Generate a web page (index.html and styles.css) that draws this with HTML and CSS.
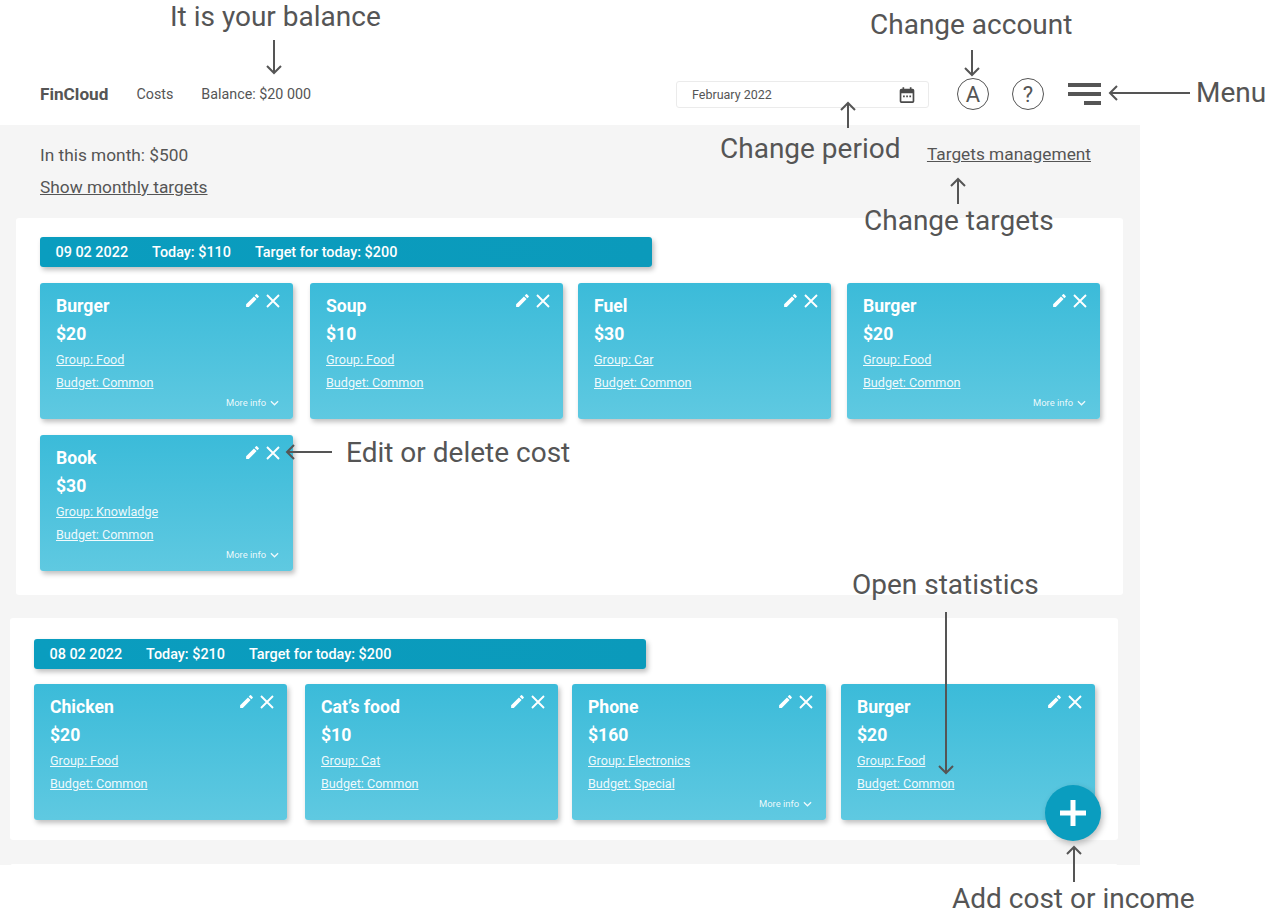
FILE: index.html
```html
<!DOCTYPE html>
<html lang="en">
<head>
    <meta charset="UTF-8">
    <meta name="viewport" content="width=device-width, initial-scale=1.0">
    <title>FinCloud - Costs</title>
    <link rel="stylesheet" href="styles.css">
</head>
<body>
    <svg class="icon-defs" width="0" height="0">
        <symbol id="i-pencil" viewBox="0 0 24 24"><path d="M3 17.25V21h3.75L17.81 9.94l-3.75-3.75L3 17.25zM20.71 7.04a1 1 0 0 0 0-1.41l-2.34-2.34a1 1 0 0 0-1.41 0l-1.83 1.83 3.75 3.75 1.83-1.83z"/></symbol>
        <symbol id="i-close" viewBox="0 0 14 14"><path d="M1 1l12 12M13 1L1 13" fill="none" stroke="currentColor" stroke-width="1.9"/></symbol>
        <symbol id="i-chevron" viewBox="0 0 10 6"><path d="M1 1l4 4 4-4" fill="none" stroke="currentColor" stroke-width="1.4"/></symbol>
    </svg>

    <div class="app">
        <header class="topbar">
            <a class="logo" href="#">FinCloud</a>
            <a class="nav-link" href="#">Costs</a>
            <span class="nav-link">Balance: $20 000</span>
            <div class="period">
                <span>February 2022</span>
                <svg class="calendar" viewBox="0 0 16 16" width="18" height="18"><path d="M4 1h1.500v1.500h5V1H12v1.500h1A1.500 1.500 0 0 1 14.500 4v9.500A1.500 1.500 0 0 1 13 15H3a1.500 1.500 0 0 1-1.500-1.500V4A1.500 1.500 0 0 1 3 2.500h1V1zM3 6.500v7h10v-7H3zm1.500 2h1.500V10H4.500V8.500zm2.800 0h1.500V10H7.300V8.500zm2.800 0h1.500V10h-1.500V8.500z" fill="#4a4a4a"/></svg>
            </div>
            <span class="round-btn">A</span>
            <span class="round-btn help">?</span>
            <div class="burger"><i></i><i></i><i class="short"></i></div>
        </header>

        <main class="content">
            <div class="summary">
                <div>
                    <p class="month-total">In this month: $500</p>
                    <a class="text-link" href="#">Show monthly targets</a>
                </div>
                <a class="text-link targets-link" href="#">Targets management</a>
            </div>

            <section class="day day-first">
                <div class="day-bar"><b>09 02 2022</b><b>Today: $110</b><b>Target for today: $200</b></div>
                <div class="cards cards-first">
                    <article class="card">
                        <div class="card-tools"><svg class="pencil"><use href="#i-pencil"/></svg><svg class="close"><use href="#i-close"/></svg></div>
                        <h3>Burger</h3><p class="price">$20</p>
                        <a href="#">Group: Food</a><a href="#">Budget: Common</a>
                        <span class="more">More info <svg class="chevron"><use href="#i-chevron"/></svg></span>
                    </article>
                    <article class="card">
                        <div class="card-tools"><svg class="pencil"><use href="#i-pencil"/></svg><svg class="close"><use href="#i-close"/></svg></div>
                        <h3>Soup</h3><p class="price">$10</p>
                        <a href="#">Group: Food</a><a href="#">Budget: Common</a>
                    </article>
                    <article class="card">
                        <div class="card-tools"><svg class="pencil"><use href="#i-pencil"/></svg><svg class="close"><use href="#i-close"/></svg></div>
                        <h3>Fuel</h3><p class="price">$30</p>
                        <a href="#">Group: Car</a><a href="#">Budget: Common</a>
                    </article>
                    <article class="card">
                        <div class="card-tools"><svg class="pencil"><use href="#i-pencil"/></svg><svg class="close"><use href="#i-close"/></svg></div>
                        <h3>Burger</h3><p class="price">$20</p>
                        <a href="#">Group: Food</a><a href="#">Budget: Common</a>
                        <span class="more">More info <svg class="chevron"><use href="#i-chevron"/></svg></span>
                    </article>
                    <article class="card">
                        <div class="card-tools"><svg class="pencil"><use href="#i-pencil"/></svg><svg class="close"><use href="#i-close"/></svg></div>
                        <h3>Book</h3><p class="price">$30</p>
                        <a href="#">Group: Knowladge</a><a href="#">Budget: Common</a>
                        <span class="more">More info <svg class="chevron"><use href="#i-chevron"/></svg></span>
                    </article>
                </div>
            </section>

            <section class="day day-second">
                <div class="day-bar"><b>08 02 2022</b><b>Today: $210</b><b>Target for today: $200</b></div>
                <div class="cards cards-second">
                    <article class="card">
                        <div class="card-tools"><svg class="pencil"><use href="#i-pencil"/></svg><svg class="close"><use href="#i-close"/></svg></div>
                        <h3>Chicken</h3><p class="price">$20</p>
                        <a href="#">Group: Food</a><a href="#">Budget: Common</a>
                    </article>
                    <article class="card">
                        <div class="card-tools"><svg class="pencil"><use href="#i-pencil"/></svg><svg class="close"><use href="#i-close"/></svg></div>
                        <h3>Cat’s food</h3><p class="price">$10</p>
                        <a href="#">Group: Cat</a><a href="#">Budget: Common</a>
                    </article>
                    <article class="card">
                        <div class="card-tools"><svg class="pencil"><use href="#i-pencil"/></svg><svg class="close"><use href="#i-close"/></svg></div>
                        <h3>Phone</h3><p class="price">$160</p>
                        <a href="#">Group: Electronics</a><a href="#">Budget: Special</a>
                        <span class="more">More info <svg class="chevron"><use href="#i-chevron"/></svg></span>
                    </article>
                    <article class="card">
                        <div class="card-tools"><svg class="pencil"><use href="#i-pencil"/></svg><svg class="close"><use href="#i-close"/></svg></div>
                        <h3>Burger</h3><p class="price">$20</p>
                        <a href="#">Group: Food</a><a href="#">Budget: Common</a>
                    </article>
                </div>
            </section>
            <div class="day-next"></div>
        </main>

        <button class="fab" type="button" aria-label="Add">
            <svg viewBox="0 0 26 26" width="26" height="26"><path d="M10.500 0h5v10.500H26v5H15.500V26h-5V15.500H0v-5h10.500z" fill="#fff"/></svg>
        </button>
    </div>

    <!-- notes drawn over the page -->
    <span class="note note-balance">It is your balance</span>
    <span class="note note-account">Change account</span>
    <span class="note note-menu">Menu</span>
    <span class="note note-period">Change period</span>
    <span class="note note-targets">Change targets</span>
    <span class="note note-edit">Edit or delete cost</span>
    <span class="note note-stats">Open statistics</span>
    <span class="note note-add">Add cost or income</span>

    <svg class="arrows" width="1268" height="914" viewBox="0 0 1268 914">
        <path d="M274 40v33M267 66l7 7 7-7"/>
        <path d="M972 50v25M965 68l7 7 7-7"/>
        <path d="M1190 93h-80M1117 86l-7 7 7 7"/>
        <path d="M848 128v-25M841 110l7-7 7 7"/>
        <path d="M958 204v-25M951 186l7-7 7 7"/>
        <path d="M332 452h-45M294 445l-7 7 7 7"/>
        <path d="M946 612v161M939 766l7 7 7-7"/>
        <path d="M1074 882v-35M1067 854l7-7 7 7"/>
    </svg>
</body>
</html>
```

FILE: styles.css
```css
* {
    box-sizing: border-box;
}

body {
    margin: 0;
    width: 1268px;
    height: 914px;
    position: relative;
    overflow: hidden;
    background-color: #fff;
    font-family: Roboto, "Liberation Sans", sans-serif;
    color: #555;
}

a {
    color: inherit;
}

.icon-defs {
    position: absolute;
}

.app {
    width: 1140px;
}

.topbar {
    height: 125px;
    padding: 81px 167px 0 40px;
    display: flex;
    align-items: flex-start;
    width: 1268px;
}

.logo {
    font-size: 17.2px;
    font-weight: 700;
    line-height: 27px;
    text-decoration: none;
    margin-right: 28px;
}

.nav-link {
    font-size: 14.3px;
    line-height: 27px;
    text-decoration: none;
    margin-right: 28px;
}

.period {
    width: 253px;
    height: 27px;
    margin-left: auto;
    margin-right: 28px;
    padding: 0 12px 0 15px;
    border: 1px solid #ebebeb;
    border-radius: 3px;
    display: flex;
    align-items: center;
    justify-content: space-between;
    font-size: 12.5px;
}

.round-btn {
    width: 32px;
    height: 32px;
    margin-top: -3px;
    margin-right: 23px;
    border: 1.5px solid #555;
    border-radius: 50%;
    display: flex;
    align-items: center;
    justify-content: center;
    font-size: 22px;
}

.help {
    margin-right: 24px;
}

.burger {
    width: 33px;
    display: flex;
    flex-direction: column;
    align-items: flex-end;
    gap: 5px;
    margin-top: 2px;
}

.burger i {
    display: block;
    width: 33px;
    height: 4px;
    background-color: #555;
}

.burger i.short {
    width: 17px;
}

.content {
    height: 740px;
    background-color: #f5f5f5;
    overflow: hidden;
}

.summary {
    height: 93px;
    padding: 20px 49px 0 40px;
    display: flex;
    justify-content: space-between;
    align-items: flex-start;
}

.month-total {
    margin: 0 0 12px;
    font-size: 17.3px;
    line-height: 20px;
}

.text-link {
    font-size: 17.3px;
    line-height: 20px;
    display: block;
}

.targets-link {
    margin-top: -1px;
}

.day {
    background-color: #fff;
    border-radius: 3px;
}

.day-first {
    width: 1107px;
    height: 377px;
    margin: 0 0 23px 16px;
    padding: 19px 24px 0;
}

.day-second {
    width: 1108px;
    height: 222px;
    margin: 0 0 24px 10px;
    padding: 21px 24px 0;
}

.day-next {
    width: 1108px;
    height: 20px;
    margin-left: 10px;
    background-color: #fff;
    border-radius: 3px;
}

.day-bar {
    width: 612px;
    height: 30px;
    padding-left: 15.5px;
    display: flex;
    align-items: center;
    gap: 24px;
    border-radius: 3px;
    background: linear-gradient(90deg, #0a9dbf, #0b9abb);
    box-shadow: 2px 3px 5px rgba(0, 0, 0, 0.25);
    color: #fff;
    font-size: 14.4px;
}

.day-bar b {
    font-weight: 500;
}

.cards {
    display: grid;
    row-gap: 16px;
    margin-top: 16px;
}

.cards-first {
    grid-template-columns: 270px 268px 269px 253px;
}

.cards-second {
    grid-template-columns: 271px 267px 269px 254px;
    margin-top: 15px;
}

.card {
    width: 253px;
    height: 136px;
    position: relative;
    padding: 12px 16px 0;
    border-radius: 3px;
    background: linear-gradient(180deg, #3bbbd9, #5fc9e1);
    box-shadow: 2px 3px 5px rgba(0, 0, 0, 0.25);
    color: #fff;
}

.cards-second .card:nth-child(n+3) {
    width: 254px;
}

.card h3 {
    margin: 0;
    font-size: 17.6px;
    font-weight: 700;
    line-height: 23px;
}

.card .price {
    margin: 5px 0 6px;
    font-size: 17.6px;
    font-weight: 700;
    line-height: 23px;
}

.card a {
    display: table;
    font-size: 12.6px;
    line-height: 16px;
    margin-bottom: 7px;
    color: rgba(255, 255, 255, 0.92);
}

.card-tools {
    position: absolute;
    top: 9px;
    right: 13px;
    display: flex;
    align-items: center;
    gap: 5px;
}

.pencil {
    width: 17px;
    height: 17px;
    fill: #fff;
}

.close {
    width: 14px;
    height: 14px;
    color: #fff;
}

.more {
    position: absolute;
    right: 14px;
    bottom: 10px;
    display: flex;
    align-items: center;
    gap: 4px;
    font-size: 9.4px;
    line-height: 12px;
    color: rgba(255, 255, 255, 0.9);
}

.chevron {
    width: 9px;
    height: 6px;
}

.fab {
    position: absolute;
    left: 1045px;
    top: 785px;
    width: 56px;
    height: 56px;
    padding: 0;
    border: 0;
    border-radius: 50%;
    display: flex;
    align-items: center;
    justify-content: center;
    background-color: #0a9dbf;
    box-shadow: 2px 3px 6px rgba(0, 0, 0, 0.25);
}

.note {
    position: absolute;
    font-size: 28px;
    line-height: 34px;
    white-space: nowrap;
}

.note-balance { left: 170px; top: 0; }
.note-account { left: 870px; top: 8px; }
.note-menu { left: 1196px; top: 76px; }
.note-period { left: 720px; top: 132px; }
.note-targets { left: 864px; top: 204px; }
.note-edit { left: 346px; top: 436px; }
.note-stats { left: 852px; top: 568px; }
.note-add { left: 952px; top: 882px; }

.arrows {
    position: absolute;
    left: 0;
    top: 0;
    fill: none;
    stroke: #555;
    stroke-width: 2;
    pointer-events: none;
}
```
